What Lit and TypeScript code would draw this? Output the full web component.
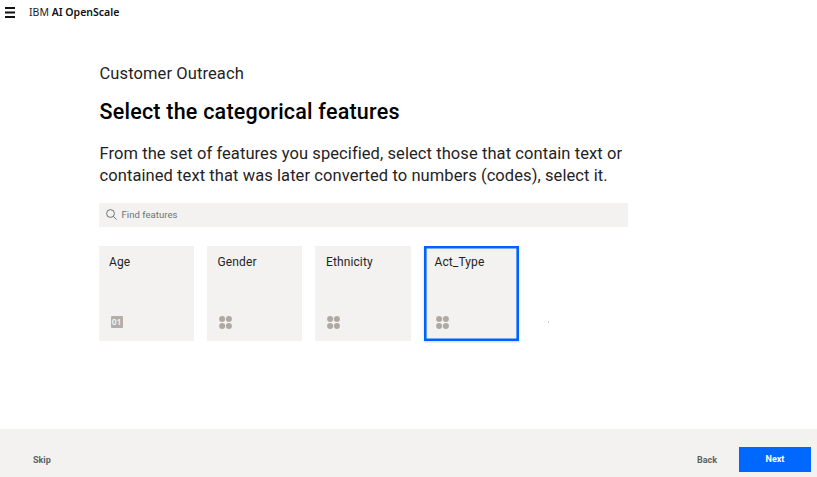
import { LitElement, html, css, svg } from "lit";
import { customElement, property } from "lit/decorators.js";

interface Feature {
  name: string;
  kind: "numeric" | "categorical";
  selected?: boolean;
}

const FEATURES: Feature[] = [
  { name: "Age", kind: "numeric" },
  { name: "Gender", kind: "categorical" },
  { name: "Ethnicity", kind: "categorical" },
  { name: "Act_Type", kind: "categorical", selected: true },
];

const DOTS = [[3.1, 3.1], [9.9, 3.1], [3.1, 9.9], [9.9, 9.9]];

@customElement("feature-tile")
export class FeatureTile extends LitElement {
  @property() name = "";
  @property() kind = "categorical";
  @property({ type: Boolean, reflect: true }) selected = false;

  static styles = css`
    :host {
      display: flex;
      flex-direction: column;
      justify-content: space-between;
      box-sizing: border-box;
      width: 95.3px;
      height: 95px;
      padding: 9px 10.5px 12px;
      background: #f3f2f1;
      color: #1f2326;
    }
    :host([selected]) {
      box-shadow: inset 0 0 0 2.6px #0062ff, 0 1px 2px #d4d4d4;
    }
    .name {
      font-size: 12px;
      line-height: 15px;
      letter-spacing: 0.12px;
    }
    .dots {
      display: block;
      width: 13px;
      height: 13px;
      margin-left: 1.5px;
      fill: #aea9a2;
    }
    .digits {
      width: 12px;
      height: 12px;
      margin: 0 0 1px 1.5px;
      border-radius: 1px;
      background: #b3afa8;
      color: #f7f6f4;
      font-family: "Noto Sans", sans-serif;
      font-size: 8.5px;
      font-weight: 600;
      line-height: 12px;
      text-align: center;
    }
  `;

  render() {
    return html`
      <div class="name">${this.name}</div>
      ${this.kind === "numeric"
        ? html`<div class="digits">01</div>`
        : html`<svg class="dots" viewBox="0 0 13 13">
            ${DOTS.map(([x, y]) => svg`<circle cx=${x} cy=${y} r="3"></circle>`)}
          </svg>`}
    `;
  }
}

@customElement("app-root")
export class AppRoot extends LitElement {
  static styles = css`
    :host {
      display: flex;
      flex-direction: column;
      box-sizing: border-box;
      height: 477px;
      overflow: hidden;
      background: #fff;
      color: #1f2326;
      font-family: Roboto, "Noto Sans", sans-serif;
    }
    header {
      display: flex;
      align-items: center;
      height: 25px;
      padding-left: 5px;
      gap: 14px;
    }
    .menu {
      width: 10px;
      height: 11px;
      fill: #111;
    }
    .brand {
      margin-top: -1px;
      font: 10.5px/14px "Noto Sans", sans-serif;
      letter-spacing: 0;
      color: #222;
    }
    .brand b {
      font-weight: 600;
      color: #111;
    }
    main {
      flex: 1;
      padding: 39px 0 0 98.5px;
    }
    .project {
      margin: 0 0 0 1px;
      font-size: 16.5px;
      line-height: 20px;
      letter-spacing: 0.1px;
    }
    h1 {
      margin: 14px 0 0 1px;
      font-size: 21.5px;
      font-weight: 500;
      line-height: 28px;
      letter-spacing: 0.22px;
      color: #000;
    }
    .lead {
      margin: 17px 0 0 1px;
      font-size: 16.5px;
      line-height: 22px;
      letter-spacing: 0.08px;
      white-space: nowrap;
    }
    .search {
      display: flex;
      align-items: center;
      gap: 5px;
      box-sizing: border-box;
      width: 529.5px;
      height: 24px;
      margin-top: 16px;
      padding: 0 0 1px 7px;
      background: #f3f2f1;
      color: #6a7475;
      font-size: 9.5px;
      letter-spacing: 0.05px;
    }
    .search svg {
      width: 11px;
      height: 11px;
      fill: none;
      stroke: #6a7475;
    }
    .tiles {
      display: flex;
      gap: 13.2px;
      margin-top: 19px;
    }
    .speck {
      align-self: flex-end;
      width: 1.5px;
      height: 2px;
      margin: 0 0 18px 15.5px;
      background: #c9c9c9;
    }
    footer {
      display: flex;
      align-items: center;
      box-sizing: border-box;
      height: 48px;
      padding: 13px 6px 0 33px;
      background: #f3f2f1;
      color: #5a6464;
      font-size: 9px;
      font-weight: 700;
    }
    .back {
      margin: 0 22px 0 auto;
    }
    .next {
      width: 72px;
      height: 24.5px;
      line-height: 24.5px;
      text-align: center;
      background: #0068ff;
      color: #fff;
    }
  `;

  render() {
    return html`
      <header>
        <svg class="menu" viewBox="0 0 10 11">
          <path d="M0 0h10v2H0zM0 4.5h10v2H0zM0 9h10v2H0z" />
        </svg>
        <div class="brand">IBM <b>AI OpenScale</b></div>
      </header>
      <main>
        <p class="project">Customer Outreach</p>
        <h1>Select the categorical features</h1>
        <p class="lead">
          From the set of features you specified, select those that contain text or<br />
          contained text that was later converted to numbers (codes), select it.
        </p>
        <div class="search">
          <svg viewBox="0 0 11 11"><circle cx="4.5" cy="4.5" r="3.9" /><path d="M7.3 7.3 10.5 10.5" /></svg>
          <span>Find features</span>
        </div>
        <div class="tiles">
          ${FEATURES.map(
            (f) => html`<feature-tile .name=${f.name} .kind=${f.kind} ?selected=${!!f.selected}></feature-tile>`
          )}
          <div class="speck"></div>
        </div>
      </main>
      <footer>
        <span>Skip</span>
        <span class="back">Back</span>
        <div class="next">Next</div>
      </footer>
    `;
  }
}
